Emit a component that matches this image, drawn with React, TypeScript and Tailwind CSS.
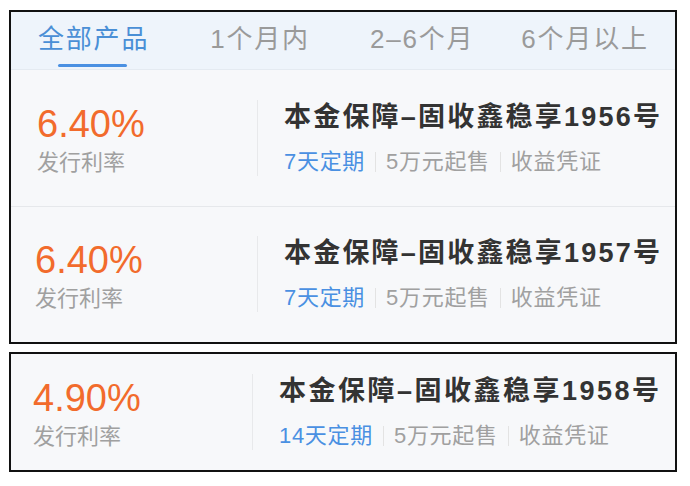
import React from "react";

const font = { fontFamily: '"Liberation Sans", "Noto Sans CJK SC", sans-serif' };

function Sep() {
  return <span className="mx-[10px] inline-block h-[20px] w-px bg-[#e3e3e3] align-middle" />;
}

function Row({ rate, term, num, border, padL, divX, track }: { rate: string; term: string; num: string; border?: boolean; padL: number; divX: number; track: number }) {
  return (
    <div className={`flex flex-1 items-center ${border ? "border-b border-[#e6e8eb]" : ""}`}>
      <div className="flex flex-col" style={{ paddingLeft: padL, width: divX }}>
        <div className="mt-[4px] text-[38px] leading-[44px] text-[#f26b2c]">{rate}</div>
        <div className="mt-[2px] text-[22px] leading-[30px] text-[#a0a0a0]">发行利率</div>
      </div>
      <div className="h-[76px] w-px bg-[#e8e9eb]" />
      <div className="flex flex-col pl-[26px]">
        <div className="text-[27px] font-bold leading-[36px] text-[#333333]" style={{ letterSpacing: track }}>本金保障–固收鑫稳享{num}号</div>
        <div className="mt-[12px] flex items-center text-[22px] leading-[30px] tracking-[0.7px] text-[#a0a0a0]">
          <span className="text-[#4a90e2]">{term}</span>
          <Sep />
          <span>5万元起售</span>
          <Sep />
          <span>收益凭证</span>
        </div>
      </div>
    </div>
  );
}

export default function App() {
  return (
    <div className="h-[486px] w-[690px] bg-white pt-[10px]" style={font}>
      <div className="ml-[9px] flex h-[334px] w-[668px] flex-col border-2 border-[#111]">
        <div className="flex h-[58px] shrink-0 items-start border-b border-[#e4eaf1] bg-[#eef4fb] pl-[27px] text-[26px] tracking-[1.8px] text-[#9a9a9a]">
          <div className="relative mt-[8px] text-[#4a8fd6]">
            全部产品
            <div className="absolute left-[20px] top-[44px] h-[3px] w-[69px] rounded bg-[#4a90e2]" />
          </div>
          <div className="ml-[61px] mt-[8px]">1个月内</div>
          <div className="ml-[60px] mt-[8px]">2–6个月</div>
          <div className="ml-[47px] mt-[8px]">6个月以上</div>
        </div>
        <div className="flex flex-1 flex-col bg-[#f7f8fa]">
          <Row rate="6.40%" term="7天定期" num="1956" border padL={26} divX={246} track={2.2} />
          <Row rate="6.40%" term="7天定期" num="1957" padL={24} divX={246} track={2.2} />
        </div>
      </div>
      <div className="ml-[9px] mt-[8px] flex h-[120px] w-[668px] border-2 border-[#111] bg-[#f7f8fa]">
        <Row rate="4.90%" term="14天定期" num="1958" padL={22} divX={241} track={2.5} />
      </div>
    </div>
  );
}
